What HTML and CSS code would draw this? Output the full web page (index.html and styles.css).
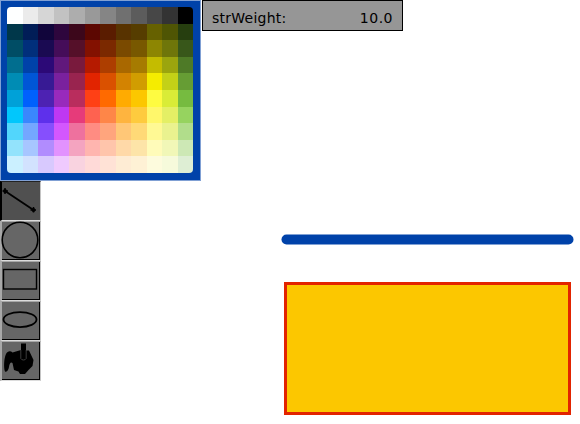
FILE: index.html
```
<!DOCTYPE html>
<html lang="en">
<head>
<meta charset="utf-8">
<title>Sketch</title>
<link rel="stylesheet" href="styles.css">
</head>
<body>
<main class="app">
  <svg class="canvas" width="580" height="424" viewBox="0 0 580 424">
    <path d="M286.5 239.5H568.5" stroke="#0042a9" stroke-width="10" stroke-linecap="round"/>
    <rect x="285.5" y="283.5" width="284" height="130" fill="#fcc700" stroke="#e22400" stroke-width="3"/>
  </svg>
  <div class="sidebar">
    <div class="palette"><div class="swatches" id="swatches"></div></div>
    <div class="tools">
      <button class="tool tool-active" aria-label="Line"><svg viewBox="0 0 40 40"><path d="M5 11L33.500 30" stroke-width="1.7"/><path d="M2.5 11H8M5 8V14M30.500 30H36M33.500 27V32.5" stroke-width="1.5"/><circle class="solid" cx="5" cy="11" r="1.9"/><circle class="solid" cx="33.5" cy="30" r="1.9"/></svg></button>
      <button class="tool" aria-label="Circle"><svg viewBox="0 0 40 40"><circle cx="20" cy="20" r="17.8" stroke-width="1.6"/></svg></button>
      <button class="tool" aria-label="Rectangle"><svg viewBox="0 0 40 40"><rect x="3.5" y="9.5" width="33" height="19.5" stroke-width="1.4"/></svg></button>
      <button class="tool" aria-label="Ellipse"><svg viewBox="0 0 40 40"><ellipse cx="20" cy="19.6" rx="16.5" ry="7.5" stroke-width="1.8"/></svg></button>
      <button class="tool" aria-label="Fill"><svg viewBox="0 0 40 40"><path class="solid" d="M5 31.500C3.500 28 4 18 6 14C7.500 11 10.500 10.500 12.500 12.500L21 10V3.500H26V10.500H29L33.500 20L32.500 26L28.500 30L25 34H20L18.500 31.500L14 30L12.500 23C11 21.500 9.500 23 9 27C8.500 30 7 32.500 5 31.500Z"/><path class="groove" d="M20.800 10V18.500C21.500 20.500 25.500 20.500 26.200 18.500V10"/></svg></button>
    </div>
  </div>
  <div class="field"><span class="label">strWeight:</span><span class="value">10.0</span></div>
</main>
<script src="script.js"></script>
</body>
</html>
```
FILE: styles.css
```
body {
  margin: 0;
  background: #fff;
  overflow: hidden;
}
.app {
  position: relative;
  display: flex;
  align-items: flex-start;
  width: 580px;
  height: 424px;
}
.canvas {
  position: absolute;
  inset: 0;
  fill: none;
}
.sidebar {
  width: 202px;
}
.palette {
  box-sizing: border-box;
  width: 201px;
  height: 181px;
  padding: 6px;
  border: 1px solid #80a0d4;
  background: #0042a9;
}
.swatches {
  display: grid;
  grid-template-columns: repeat(12, 15.5px);
  grid-template-rows: repeat(10, 16.6px);
  width: 186px;
  height: 166px;
  border-radius: 4px;
  overflow: hidden;
}
.tools {
  display: flex;
  flex-direction: column;
  width: 41px;
}
.tool {
  box-sizing: border-box;
  width: 41px;
  height: 40px;
  padding: 0;
  border: solid;
  border-width: 1px 1px 1px 2px;
  border-color: #a8a8a8 #c4c4c4 #dcdcdc #a8a8a8;
  background: #666;
  box-shadow: inset -1px -1px 0 #000;
}
.tool-active {
  border-color: #222 #c4c4c4 #dcdcdc #000;
  background: #505050;
  box-shadow: none;
}
.tool svg {
  display: block;
  width: 40px;
  height: 40px;
  margin: -2px 0 0 -2px;
  fill: none;
  stroke: #000;
}
.tool .solid {
  fill: #000;
  stroke: none;
}
.tool .groove {
  stroke: #555;
  stroke-width: 0.7;
}
.field {
  box-sizing: border-box;
  display: flex;
  justify-content: space-between;
  width: 201px;
  height: 31px;
  padding: 0 9px;
  border: 1px solid #000;
  background: #969696;
  color: #000;
  font: 14px/34px "DejaVu Sans", sans-serif;
}
.label {
  letter-spacing: 0.25px;
}
.value {
  letter-spacing: 0.5px;
}
```
FILE: script.js
```
const rows = [
  "feffff ebebeb d6d6d6 c2c2c2 adadad 999999 858585 707070 5c5c5c 474747 333333 000000",
  "00374a 011d57 11053b 2e063d 3c071b 5c0701 5a1c00 583300 563d00 666100 4f5504 263e0f",
  "004d65 012f7b 1a0a52 450d59 551029 831100 7b2900 7a4a00 785800 8d8602 6f760a 38571a",
  "016e8f 0042a9 2c0977 61187c 791a3d b51a00 ad3e00 a96800 a67b01 c4bc00 9ba50e 4e7a27",
  "008cb4 0056d6 371a94 7a219e 99244f e22400 da5100 d38301 d19d01 f5ec00 c3d117 669d34",
  "00a1d8 0061fd 4d22b2 982abc b92d5d ff4015 ff6a00 ffab01 fcc700 fefb41 d9ec37 76bb40",
  "01c7fc 3a87fd 5e30eb be38f3 e63b7a fe6250 fe8648 feb43f fecb3e fff76b e4ef65 96d35f",
  "52d6fc 74a7ff 864ffd d357fe ee719e ff8c82 ffa57d ffc777 ffd977 fff994 eaf28f b1dd8b",
  "93e3fc a7c6ff b18cfe e292fe f4a4c0 ffb5af ffc5ab ffd9a8 fde4a8 fffbb9 f1f7b7 cde8b5",
  "cbf0ff d2e2fe d8c9fe efcafe f9d3e0 ffdad8 ffe2d6 feecd4 fef1d5 fdfbdd f6fadb deeed4"
];
const grid = document.getElementById("swatches");
for (const color of rows.join(" ").split(" ")) {
  const cell = document.createElement("div");
  cell.style.background = "#" + color;
  grid.append(cell);
}
```
